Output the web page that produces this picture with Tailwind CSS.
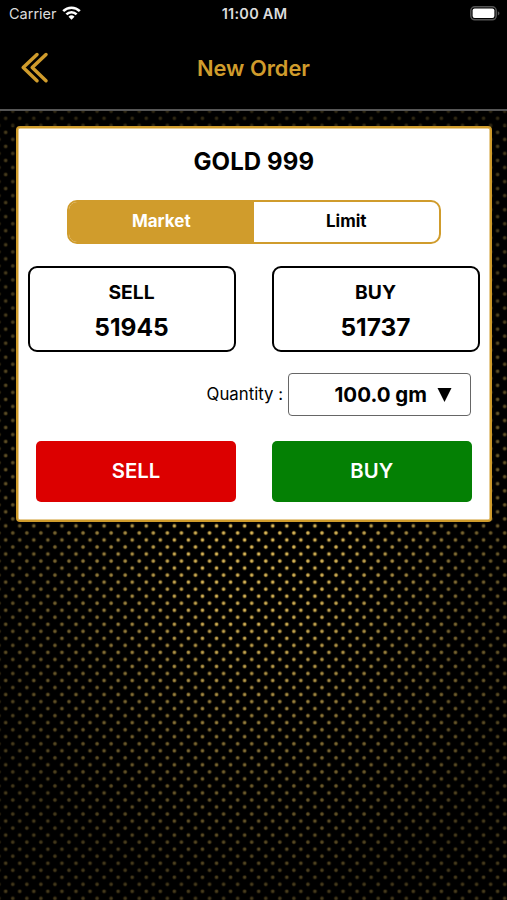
<!DOCTYPE html>
<html lang="en">
  <head>
    <meta charset="UTF-8" />
    <meta name="viewport" content="width=device-width, initial-scale=1.0" />
    <title>New Order</title>
    <script src="https://cdn.jsdelivr.net/npm/@tailwindcss/browser@4"></script>
  </head>
  <body class="bg-black font-['Inter',sans-serif] text-black">
    <div class="relative isolate flex h-[900px] w-[507px] flex-col overflow-hidden">
      <!-- Dotted background -->
      <svg class="absolute inset-0 -z-10" width="507" height="900" viewBox="0 0 507 900">
        <defs>
          <radialGradient id="dot">
            <stop offset="0" stop-color="#f0d478" />
            <stop offset="0.45" stop-color="#c9a548" />
            <stop offset="1" stop-color="#3a2a08" stop-opacity="0" />
          </radialGradient>
          <pattern id="dots" x="-1.3" y="111.3" width="14.055" height="14.055" patternUnits="userSpaceOnUse">
            <circle cx="7" cy="7" r="2.8" fill="url(#dot)" />
            <circle cx="0" cy="0" r="2.8" fill="url(#dot)" />
            <circle cx="14.055" cy="0" r="2.8" fill="url(#dot)" />
            <circle cx="0" cy="14.055" r="2.8" fill="url(#dot)" />
            <circle cx="14.055" cy="14.055" r="2.8" fill="url(#dot)" />
          </pattern>
          <radialGradient id="shade" gradientUnits="userSpaceOnUse" cx="0" cy="0" r="1" gradientTransform="translate(262 530) scale(320 370)">
            <stop offset="0" stop-color="#000" stop-opacity="0" />
            <stop offset="0.25" stop-color="#000" stop-opacity="0.08" />
            <stop offset="0.65" stop-color="#000" stop-opacity="0.48" />
            <stop offset="1" stop-color="#000" stop-opacity="0.7" />
          </radialGradient>
        </defs>
        <rect width="507" height="900" fill="url(#dots)" />
        <rect width="507" height="900" fill="url(#shade)" />
        <rect width="507" height="126" fill="#000" fill-opacity="0.3" />
      </svg>

      <!-- Header -->
      <header class="h-[111px] shrink-0 border-b-2 border-[#555] bg-black">
        <div class="grid h-[27px] grid-cols-3 items-center pr-[7px] pl-[9px] text-[#dcdcdc]">
          <div class="flex items-center gap-[5px]">
            <span class="text-[14.5px]">Carrier</span>
            <svg class="-mt-0.5" width="19" height="14" viewBox="0 0 19 14" fill="none" stroke="#fff" stroke-width="2.6">
              <path d="M1.2 5.2a11.8 11.8 0 0 1 16.6 0" />
              <path d="M4.4 8.4a7.2 7.2 0 0 1 10.2 0" />
              <path d="M9.5 13.8 6.5 10.8a4.3 4.3 0 0 1 6 0z" fill="#fff" stroke="none" />
            </svg>
          </div>
          <div class="text-center text-[14.5px] font-semibold tracking-[0.25px] whitespace-nowrap">11:00 AM</div>
          <svg class="justify-self-end" width="30" height="15" viewBox="0 0 30 15">
            <rect x="0.8" y="0.8" width="25.4" height="13" rx="4" fill="none" stroke="#555" stroke-width="1.5" />
            <rect x="2.6" y="2.6" width="21.8" height="9.4" rx="2" fill="#fff" />
            <path d="M27.8 5.2c2.2.8 2.2 3.4 0 4.2z" fill="#555" />
          </svg>
        </div>
        <div class="grid h-[82px] grid-cols-[80px_1fr_80px] items-center">
          <svg class="ml-5" width="29" height="32" viewBox="0 0 29 32" fill="none" stroke="#d09c2c" stroke-width="3.5" stroke-linecap="round" stroke-linejoin="round">
            <path d="M17 2.5 3.2 15.6 17 28.7" />
            <path d="M26 2.5 12.2 15.6 26 28.7" />
          </svg>
          <h1 class="text-center text-[21.8px] font-semibold text-[#d09c2c]">New Order</h1>
        </div>
      </header>

      <!-- Order card -->
      <main class="mt-[14.5px] ml-[15.5px] h-[396.5px] w-[476.5px] rounded-[4px] border-2 border-[#d09c2c] bg-white shadow-[inset_0_0_0_0.5px_#d09c2c]">
        <h2 class="mt-[18px] h-8 text-center text-[24px] leading-8 font-bold tracking-[0.1px]">GOLD 999</h2>

        <div class="mx-auto mt-[22.5px] flex h-11 w-[374px] overflow-hidden rounded-[10px] border-2 border-[#d09c2c] bg-white text-[17px] font-bold">
          <button class="h-full flex-1 bg-[#d09c2c] text-white">Market</button>
          <button class="h-full flex-1">Limit</button>
        </div>

        <div class="mt-[21.5px] flex justify-between pr-[10.5px] pl-[10px]">
          <div class="h-[86px] w-[208px] rounded-[9px] border-2 border-black pt-2 text-center font-bold">
            <div class="h-8 text-[19.3px] leading-8">SELL</div>
            <div class="h-9 text-[24.5px] leading-[39px]">51945</div>
          </div>
          <div class="h-[86px] w-[208px] rounded-[9px] border-2 border-black pt-2 text-center font-bold">
            <div class="h-8 text-[19.3px] leading-8">BUY</div>
            <div class="h-9 text-[24.5px] leading-[39px]">51737</div>
          </div>
        </div>

        <div class="mt-[21.5px] flex items-center justify-end gap-[5px] pr-[19px]">
          <span class="pt-px text-[16.8px]">Quantity :</span>
          <div class="flex h-[43px] w-[183px] items-center justify-end gap-[10px] rounded-[4px] border border-[#666] pr-[18px]">
            <span class="pt-px text-[20.5px] font-bold">100.0 gm</span>
            <svg width="15" height="14" viewBox="0 0 15 14"><path d="M0.5 0h14L7.5 14z" /></svg>
          </div>
        </div>

        <div class="mt-[24.5px] flex justify-between pr-[18.500px] pl-[18.5px] text-[20.3px] font-semibold text-white">
          <button class="h-[61px] w-[200px] rounded-[5px] bg-[#dc0000]">SELL</button>
          <button class="h-[61px] w-[199.5px] rounded-[5px] bg-[#048004]">BUY</button>
        </div>
      </main>
    </div>
  </body>
</html>
